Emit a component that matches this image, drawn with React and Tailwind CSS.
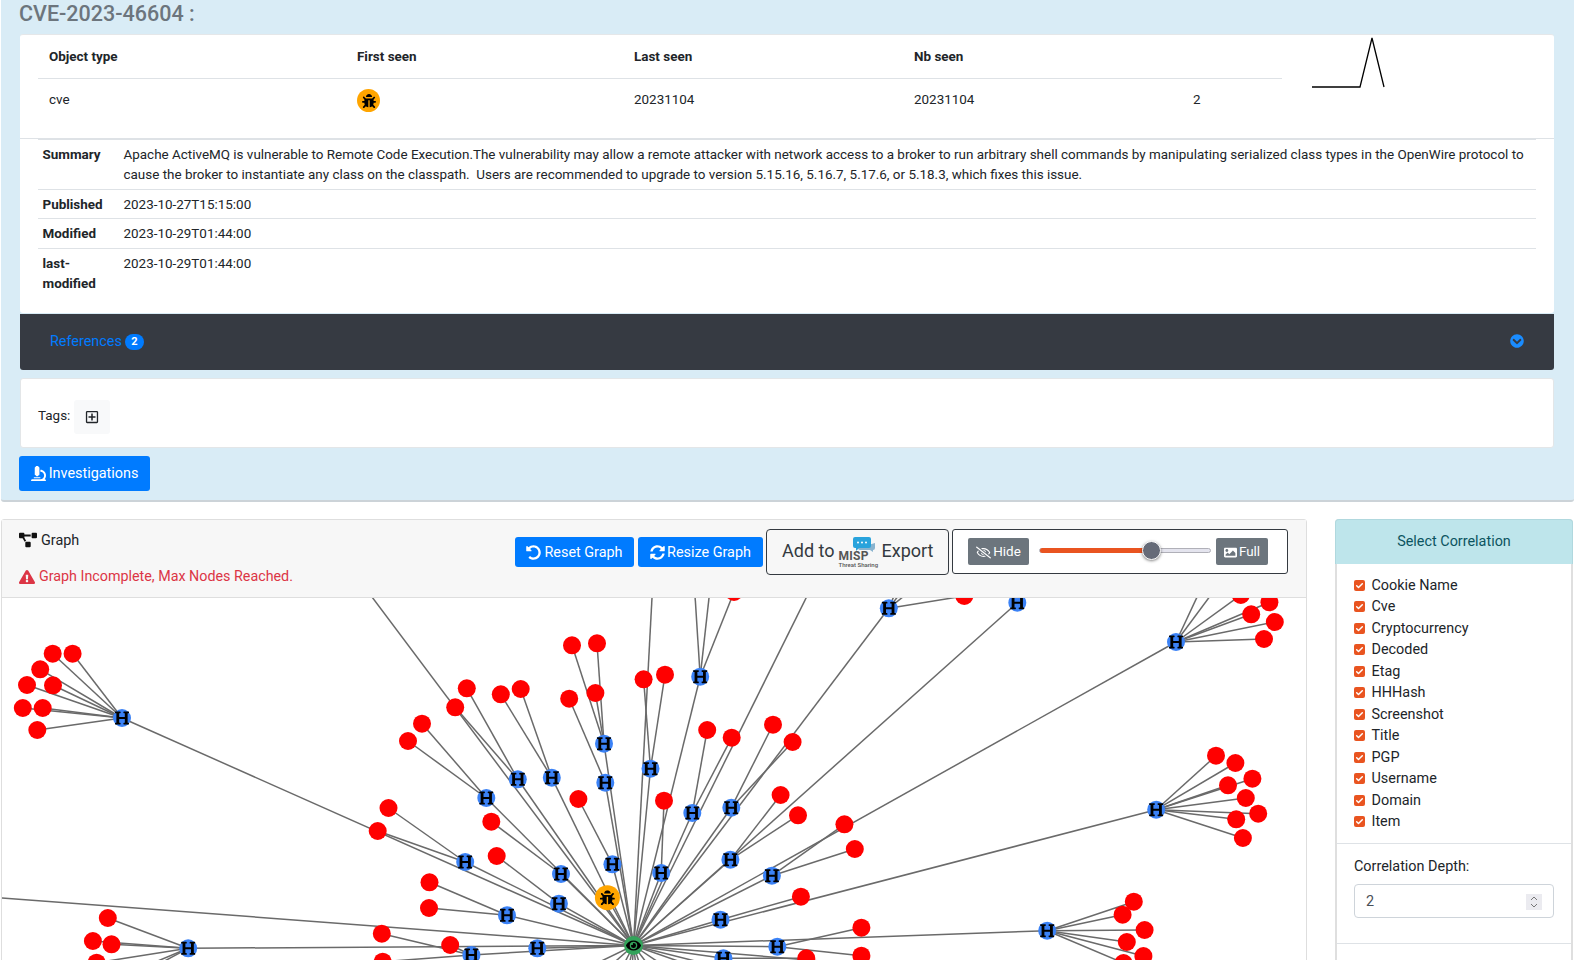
import React from "react";
import { FaBug, FaEye, FaHeading, FaUndoAlt, FaSyncAlt, FaImage, FaMicroscope, FaChevronCircleDown, FaProjectDiagram, FaExclamationTriangle } from "react-icons/fa";
import { FaRegEyeSlash, FaRegPlusSquare } from "react-icons/fa";

const C = [633.5, 945.5];
// hub: position + reds attached
const hubs = [
  { p: [122, 718], r: [[52.7,653.7],[72.6,653.7],[40.2,669.3],[27,685],[53,685.3],[22.8,708],[42.7,708],[37.3,730]] },
  { p: [604, 743.7], r: [[572,645.3],[597,643.3],[595.4,693]] },
  { p: [605.3, 782.7], r: [[569.2,698.7]] },
  { p: [650.5, 768.7], r: [[643.6,679.3],[665,674.7]] },
  { p: [517.8, 779.3], r: [[466.8,688.3],[455.2,707.3]] },
  { p: [551.8, 777.7], r: [[500.8,694.3],[520.7,689]] },
  { p: [486.3, 798], r: [[422,723.7],[408,741]] },
  { p: [465.2, 862], r: [[388.5,808],[377.7,831]] },
  { p: [561, 874], r: [[491.3,821.7]] },
  { p: [558.9, 903.7], r: [[496.7,856]] },
  { p: [612.4, 864.3], r: [[578.4,799]] },
  { p: [507, 915.3], r: [[429.5,882.3],[429,908]] },
  { p: [188.2, 948.3], r: [[107.8,918],[92.9,941],[111.5,944.3],[96.6,962.7],[120,985],[100,985]] },
  { p: [471.4, 955], r: [[381.8,933.7],[450.2,945],[382.7,961.7]] },
  { p: [537.3, 948.3], r: [] },
  { p: [700.2, 676.7], r: [[734,592],[694,580],[711,580]] },
  { p: [692.3, 813], r: [[707.2,730],[731.7,737.7]] },
  { p: [731.3, 807.7], r: [[773,724.7],[792.6,742]] },
  { p: [661.2, 873], r: [[664,800.7]] },
  { p: [730.4, 859.7], r: [[780.6,795],[798,815.3]] },
  { p: [771.9, 875.7], r: [[844.4,824.3],[854.8,849]] },
  { p: [720.5, 919.7], r: [[800.9,896.7]] },
  { p: [777.3, 946.7], r: [[861.4,927.7],[861.4,955.7]] },
  { p: [723.4, 958.3], r: [[806.3,958.3]] },
  { p: [888.8, 608.3], r: [[964.3,596],[905,570],[918,570],[930,575]] },
  { p: [1017.3, 602.7], r: [] },
  { p: [1176, 642], r: [[1269.4,602.3],[1240.8,595],[1251.2,614.3],[1274.8,622],[1264,639],[1205,580],[1222,580]] },
  { p: [1156.2, 809.7], r: [[1216,755.7],[1235.4,763],[1252.4,778.7],[1228,785.3],[1245.8,798],[1258.2,813.7],[1236.2,819.3],[1242.9,838]] },
  { p: [1047.2, 930.7], r: [[1133.8,901.7],[1122.6,914.7],[1144.6,930],[1126.8,942],[1143.4,956],[1123.5,963]] },
];
const extraEnds = [[-1,897.7],[360,581],[654,560],[815,580],[1290,1000],[500,1010],[560,1010],[590,1030],[612,1040],[628,1040],[645,1040],[662,1030],[690,1020],[730,1010],[790,1000],[850,1000]];

function Graph() {
  return (
    <svg width="1304" height="400" viewBox="2 598 1304 400" className="block">
      <g stroke="#6a6a6a" strokeWidth="1.5" fill="none">
        {hubs.map((h, i) => (
          <line key={i} x1={C[0]} y1={C[1]} x2={h.p[0]} y2={h.p[1]} />
        ))}
        {hubs.flatMap((h, i) =>
          h.r.map((r, j) => <line key={i + "-" + j} x1={h.p[0]} y1={h.p[1]} x2={r[0]} y2={r[1]} />)
        )}
        <line x1={C[0]} y1={C[1]} x2="607.4" y2="897.7" />
        {extraEnds.map((e, i) => (
          <line key={i} x1={C[0]} y1={C[1]} x2={e[0]} y2={e[1]} />
        ))}
      </g>
      {hubs.flatMap((h, i) =>
        h.r.map((r, j) => <circle key={i + "-" + j} cx={r[0]} cy={r[1]} r="9" fill="#ff0000" />)
      )}
      {hubs.map((h, i) => (
        <g key={i}>
          <circle cx={h.p[0]} cy={h.p[1]} r="9" fill="#3b82f6" />
          <FaHeading x={h.p[0] - 7.5} y={h.p[1] - 7.5} size={15} color="#000" />
        </g>
      ))}
      <circle cx="607.4" cy="897.7" r="12.5" fill="#ffa500" />
      <FaBug x={607.4 - 7.5} y={897.7 - 7.5} size={15} color="#000" />
      <circle cx={C[0]} cy={C[1]} r="9.5" fill="#33a35a" />
      <FaEye x={C[0] - 7.5} y={C[1] - 7.5} size={15} color="#000" />
    </svg>
  );
}

const labels = ["Cookie Name","Cve","Cryptocurrency","Decoded","Etag","HHHash","Screenshot","Title","PGP","Username","Domain","Item"];

function Check({ label }) {
  return (
    <label className="flex items-center h-[21.5px] text-[14.4px] text-[#212529]">
      <span className="w-[11px] h-[11px] rounded-[2px] bg-[#e95420] flex items-center justify-center mr-[6.5px] -mt-[1px]">
        <svg width="9" height="9" viewBox="0 0 16 16"><path d="M3 8.5l3.2 3.2L13 4.8" stroke="#fff" strokeWidth="2.6" fill="none" strokeLinecap="round" strokeLinejoin="round" /></svg>
      </span>
      {label}
    </label>
  );
}

function DetailRow({ label, children, last, tall }) {
  return (
    <div className={"flex pt-[5px] leading-[20px] " + (tall ? "pb-[4px] " : "pb-[3px] ") + (last ? "" : "border-b border-[#dee2e6]")}>
      <div className="w-[62px] ml-[4.5px] mr-[19px] shrink-0 font-bold">{label}</div>
      <div className="flex-1 pr-[10px]">{children}</div>
    </div>
  );
}

export default function App() {
  return (
    <div className="w-[1585px] h-[960px] overflow-hidden bg-white pl-[1px] pr-[11px] [font-family:Roboto,sans-serif] text-[#212529]">
      {/* CVE panel */}
      <div className="h-[502px] bg-[#d9ecf6] border-b-2 border-[#ccd3d8] rounded-b-[3px] pl-[18px] pr-[20px]">
        <h4 className="h-[34px] text-[21.5px] leading-[27px] font-medium text-[#6c757d]">CVE-2023-46604 :</h4>
        <div className="ml-[1px] bg-white rounded-[3px] border-t border-[#e5e7e9] text-[13.44px] h-[279px]">
          <div className="flex px-[18px] h-[103px]">
            <div className="w-[1244px] shrink-0">
              <div className="grid grid-cols-[308px_277px_280px_279px_100px] h-[44px] pt-[2px] items-center border-b border-[#dee2e6] font-bold pl-[11px]">
                <span>Object type</span>
                <span>First seen</span>
                <span>Last seen</span>
                <span>Nb seen</span>
                <span></span>
              </div>
              <div className="grid grid-cols-[308px_277px_280px_279px_100px] h-[43px] items-center pl-[11px]">
                <span>cve</span>
                <span className="w-[23px] h-[23px] rounded-full bg-[#ffa500] flex items-center justify-center"><FaBug size={14} color="#000" /></span>
                <span>20231104</span>
                <span>20231104</span>
                <span>2</span>
              </div>
            </div>
            <svg width="80" height="52" viewBox="0 0 80 52" className="ml-[30px] mt-[1px] shrink-0" fill="none" stroke="#000">
              <path d="M0 51H48L60 2L72 51" strokeWidth="1.3" />
            </svg>
          </div>
          <div className="border-t border-[#dee2e6]">
            <div className="mx-[18px] border-t border-[#dee2e6]">
              <DetailRow label="Summary" tall>Apache ActiveMQ is vulnerable to Remote Code Execution.The vulnerability may allow a remote attacker with network access to a broker to run arbitrary shell commands by manipulating serialized class types in the OpenWire protocol to cause the broker to instantiate any class on the classpath.{"\u00a0 "}Users are recommended to upgrade to version 5.15.16, 5.16.7, 5.17.6, or 5.18.3, which fixes this issue.</DetailRow>
              <DetailRow label="Published">2023-10-27T15:15:00</DetailRow>
              <DetailRow label="Modified" tall>2023-10-29T01:44:00</DetailRow>
              <DetailRow label="last-modified" last>2023-10-29T01:44:00</DetailRow>
            </div>
          </div>
        </div>
        <div className="ml-[1px] h-[56px] bg-[#363a42] rounded-b-[3px] flex items-center pl-[30px] pr-[30px] text-[14.4px] mt-[1px]">
          <span className="text-[#007bff] -mt-[1px]">References</span>
          <span className="ml-[3px] w-[19px] h-[16px] rounded-full bg-[#007bff] text-white text-[11px] font-bold flex items-center justify-center">2</span>
          <FaChevronCircleDown className="ml-auto -mt-[3px] text-[#1a8cff]" size={14} />
        </div>
        <div className="ml-[1px] mt-[8px] h-[70px] bg-white rounded-[3px] border border-[#e3e6e8] flex items-start pt-[21px] pl-[17px] text-[13.44px]">
          <span className="mt-[6px] leading-[20px]">Tags:</span>
          <button className="ml-[4px] w-[36px] h-[34px] bg-[#f8f9fa] rounded-[3px] flex items-center justify-center"><FaRegPlusSquare size={14} color="#212529" /></button>
        </div>
        <button className="mt-[8px] w-[131px] h-[35px] bg-[#007bff] text-white rounded-[3px] flex items-center justify-center text-[14.4px] gap-[3px]">
          <FaMicroscope size={15} />Investigations
        </button>
      </div>

      <div className="flex items-start mt-[17px]">
        {/* Graph card */}
        <div className="w-[1306px] shrink-0 border border-[#dedede] rounded-t-[3px] bg-white">
          <div className="h-[78px] bg-[#f7f7f7] border-b border-[#dedede] flex justify-between pl-[17px] pr-[18px] pt-[10px]">
            <div className="text-[14.4px]">
              <div className="flex items-center h-[20px] mt-[1px] gap-[4px]">
                <FaProjectDiagram size={18} color="#111" className="-mt-[3px]" />
                <span>Graph</span>
              </div>
              <div className="flex items-center h-[20px] mt-[16px] gap-[4px] text-[#dc3545] text-[14.3px]">
                <FaExclamationTriangle size={16} />
                <span>Graph Incomplete, Max Nodes Reached.</span>
              </div>
            </div>
            <div className="flex items-start gap-[3px] h-[46px] -mt-[1px]">
              <button className="mt-[8px] mr-[1px] w-[119px] h-[30px] pt-[1px] bg-[#007bff] text-white rounded-[3px] text-[14.4px] flex items-center justify-center gap-[3px]"><FaUndoAlt size={15} />Reset Graph</button>
              <button className="mt-[8px] w-[125px] h-[30px] pt-[1px] bg-[#007bff] text-white rounded-[3px] text-[14.4px] flex items-center justify-center gap-[2px]"><FaSyncAlt size={15} />Resize Graph</button>
              <button className="w-[183px] h-[46px] border border-[#343a40] rounded-[4px] text-[18px] text-[#343a40] flex items-center pl-[15px]">
                <span className="-mt-[3px]">Add to</span>
                <span className="ml-[4px] w-[38px] h-[30px] flex flex-col items-end mt-[2px] leading-none">
                  <svg width="22" height="15" viewBox="0 0 22 15" className="mr-[2px] -mt-[1px] shrink-0">
                    <path d="M5 11a2 2 0 0 0 2 2h10l3 2v-2a2 2 0 0 0 2-2V6z" fill="#8ab4cf" />
                    <path d="M2 0h14a2 2 0 0 1 2 2v7a2 2 0 0 1-2 2H6l-3 3v-3H2a2 2 0 0 1-2-2V2a2 2 0 0 1 2-2z" fill="#29a3dc" />
                    <circle cx="5" cy="5.5" r="1" fill="#fff" /><circle cx="9" cy="5.5" r="1" fill="#fff" /><circle cx="13" cy="5.5" r="1" fill="#fff" />
                  </svg>
                  <span className="self-start text-[12px] font-bold text-[#555] leading-[10px] -mt-[1px] tracking-[0.3px]">MISP</span>
                  <span className="self-start text-[6px] font-medium text-[#555] leading-[7px] whitespace-nowrap">Threat Sharing</span>
                </span>
                <span className="ml-[5px] -mt-[3px]">Export</span>
              </button>
              <div className="w-[336px] h-[45px] bg-white border border-[#343a40] rounded-[3px] flex items-center pl-[15px]">
                <button className="w-[61px] h-[27px] pt-[1px] bg-[#6c757d] text-white rounded-[2px] text-[13.44px] flex items-center justify-center gap-[2px]"><FaRegEyeSlash size={15} />Hide</button>
                <div className="relative ml-[10px] w-[172px] h-[5px] -mt-[2px] rounded-full bg-[#e4e4ee] border border-[#b0b0b8] flex">
                  <div className="w-[111px] -my-[1px] h-[5px] rounded-l-full bg-[#e95420]"></div>
                  <div className="absolute left-[102px] -top-[8px] w-[19px] h-[19px] rounded-full bg-[#666b78] border border-white shadow-[0_1px_3px_rgba(0,0,0,0.5)]"></div>
                </div>
                <button className="ml-[5px] w-[52px] h-[27px] pt-[1px] bg-[#6c757d] text-white rounded-[2px] text-[13.44px] flex items-center justify-center gap-[2px]"><FaImage size={13} />Full</button>
              </div>
            </div>
          </div>
          <Graph />
        </div>

        {/* Side card */}
        <div className="w-[238px] ml-[28px] shrink-0 border-2 border-[#dfdfdf] border-t-0 rounded-t-[4px] bg-white text-[14.4px]">
          <div className="h-[45px] pb-[1px] bg-[#bee5eb] -mx-[2px] rounded-t-[4px] border border-[#b0d8de] border-b-0 flex items-center justify-center text-[#0c5460]">Select Correlation</div>
          <div className="pl-[17px] pt-[11px] pb-[10px] border-b border-[#dee2e6]">
            {labels.map((l) => <Check key={l} label={l} />)}
          </div>
          <div className="h-[100px] pl-[17px] border-b border-[#dee2e6] pt-[13px]">
            <div className="leading-[20px]">Correlation Depth:</div>
            <div className="mt-[7px] w-[200px] h-[34px] pt-[1px] rounded-[4px] border border-[#ced4da] flex items-center pl-[11px] pr-[11px] justify-between text-[#495057]">
              <span>2</span>
              <span className="w-[16px] h-[16px] bg-[#ebebf0] flex items-center justify-center">
                <svg width="10" height="14" viewBox="0 0 10 14" fill="none" stroke="#777" strokeWidth="1"><path d="M2 5l3-3 3 3M2 9l3 3 3-3" /></svg>
              </span>
            </div>
          </div>
          <div className="pl-[17px] pt-[14px] leading-[20px]">Max number of nodes:</div>
        </div>
      </div>
    </div>
  );
}
